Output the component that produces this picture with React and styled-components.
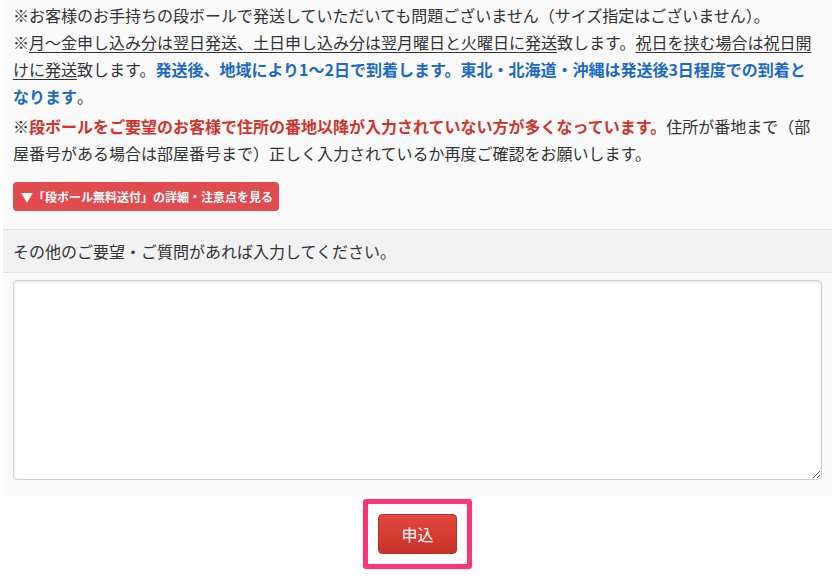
import styled, { createGlobalStyle } from 'styled-components';

const GlobalStyle = createGlobalStyle`
  body {
    margin: 0;
    background: #fff;
    font-family: "Noto Sans CJK JP", "Noto Sans", sans-serif;
    color: #333;
  }
`;

const Page = styled.div`
  width: 835px;
`;

const Panel = styled.section`
  margin: 0 3px;
  background: #f9f9f9;
  padding: 2px 0 16px;
`;

const Notes = styled.div`
  padding: 0 14px 0 10px;
`;

const Note = styled.p`
  margin: ${({ $gap }) => ($gap ? '3px 0 0' : '0')};
  font-size: 16px;
  line-height: 27px;
`;

const U = styled.span`
  text-decoration: underline;
  text-underline-offset: 3px;
`;

const Em = styled.strong`
  font-weight: bold;
  color: ${({ $tone }) => ($tone === 'red' ? '#d1322c' : '#1c6ac6')};
`;

const DetailButton = styled.button`
  display: inline-flex;
  align-items: center;
  margin-top: 15px;
  height: 29px;
  width: 266px;
  padding: 0 0 0 8px;
  border: none;
  border-radius: 4px;
  background: #e14a4f;
  color: #fff;
  font-family: inherit;
  font-size: 12px;
  font-weight: bold;
  white-space: nowrap;
  cursor: pointer;
`;

const FieldHead = styled.div`
  margin-top: 18px;
  height: 42px;
  display: flex;
  align-items: center;
  padding: 0 10px;
  background: #f1f1f1;
  border-top: 1px dotted #d6d6d6;
  border-bottom: 1px dotted #d6d6d6;
  font-size: 16px;
`;

const FieldBody = styled.div`
  padding: 7px 10px 0;
`;

const TextArea = styled.textarea`
  display: block;
  box-sizing: border-box;
  width: 809px;
  height: 200px;
  border: 1px solid #d0d0d0;
  border-radius: 4px;
  background: #fff;
  box-shadow: inset 0 1px 3px rgba(0, 0, 0, 0.12);
  font-family: inherit;
  font-size: 14px;
  resize: vertical;
`;

const Actions = styled.div`
  display: flex;
  justify-content: center;
  padding-top: 3px;
`;

const Highlight = styled.div`
  padding: 10px;
  border: 5px solid #ff3377;
  border-radius: 3px;
`;

const SubmitButton = styled.button`
  width: 79px;
  height: 40px;
  border: 1px solid #b8302a;
  border-radius: 4px;
  background: linear-gradient(#e2483d, #c93128);
  color: #fff;
  font-family: inherit;
  font-size: 16px;
  cursor: pointer;
`;

export default function App() {
  return (
    <Page>
      <GlobalStyle />
      <Panel>
        <Notes>
          <Note>
            ※お客様のお手持ちの段ボールで発送していただいても問題ございません（サイズ指定はございません）。
          </Note>
          <Note>
            ※<U>月〜金申し込み分は翌日発送、土日申し込み分は翌月曜日と火曜日に発送</U>致します。
            <U>祝日を挟む場合は祝日開けに発送</U>致します。
            <Em>発送後、地域により1〜2日で到着します。東北・北海道・沖縄は発送後3日程度での到着となります</Em>。
          </Note>
          <Note $gap>
            ※<Em $tone="red">段ボールをご要望のお客様で住所の番地以降が入力されていない方が多くなっています。</Em>
            住所が番地まで（部屋番号がある場合は部屋番号まで）正しく入力されているか再度ご確認をお願いします。
          </Note>
          <DetailButton>▼「段ボール無料送付」の詳細・注意点を見る</DetailButton>
        </Notes>
        <FieldHead>その他のご要望・ご質問があれば入力してください。</FieldHead>
        <FieldBody>
          <TextArea />
        </FieldBody>
      </Panel>
      <Actions>
        <Highlight>
          <SubmitButton>申込</SubmitButton>
        </Highlight>
      </Actions>
    </Page>
  );
}
